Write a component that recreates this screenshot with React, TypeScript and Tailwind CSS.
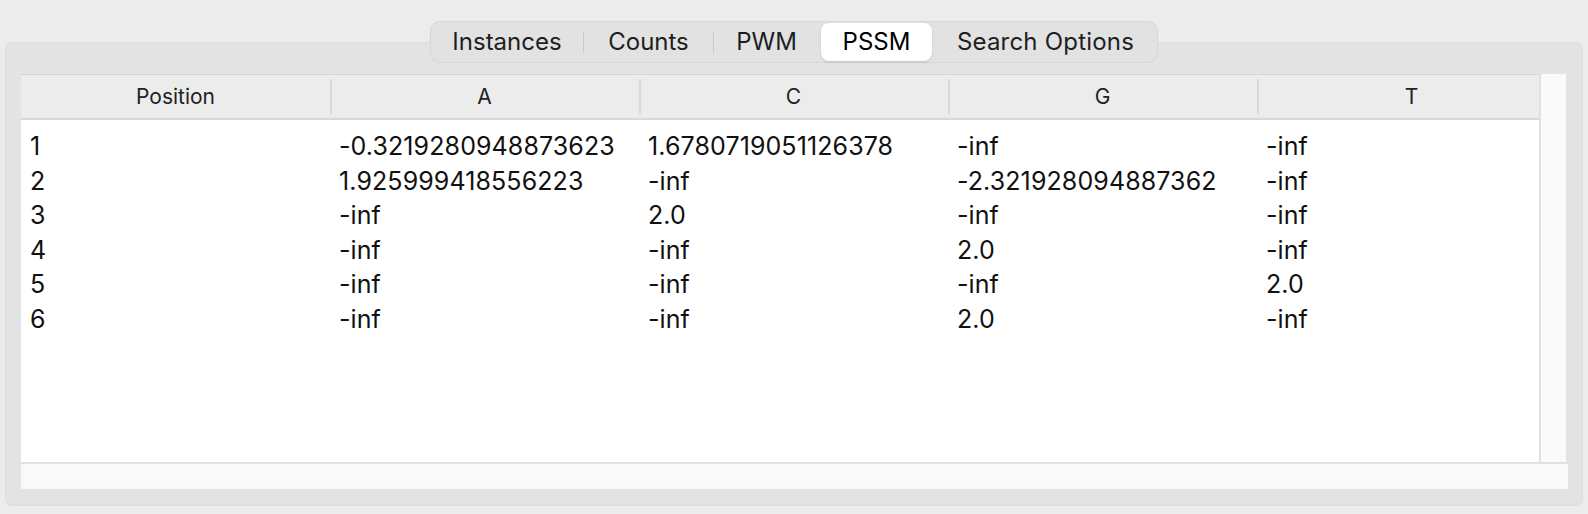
import React from "react";

const rows: string[][] = [
  ["1", "-0.3219280948873623", "1.6780719051126378", "-inf", "-inf"],
  ["2", "1.925999418556223", "-inf", "-2.321928094887362", "-inf"],
  ["3", "-inf", "2.0", "-inf", "-inf"],
  ["4", "-inf", "-inf", "2.0", "-inf"],
  ["5", "-inf", "-inf", "-inf", "2.0"],
  ["6", "-inf", "-inf", "2.0", "-inf"],
];

const headers = ["Position", "A", "C", "G", "T"];

export default function App() {
  return (
    <div
      className="w-[1588px] h-[514px] bg-[#ececec] pt-[21px] overflow-hidden"
      style={{ fontFamily: "Inter, 'Noto Sans', sans-serif" }}
    >
      {/* Segmented control */}
      <div className="relative z-10 flex justify-center">
        <div className="flex items-stretch h-[42px] rounded-[10px] bg-[#e2e2e2] border border-[#d6d6d6] text-[24px] text-[#1e1e1e] leading-none">
          <div className="w-[152px] flex items-center justify-center">Instances</div>
          <div className="w-px self-center h-[21px] bg-[#c9c9c9]" />
          <div className="w-[129px] flex items-center justify-center">Counts</div>
          <div className="w-px self-center h-[21px] bg-[#c9c9c9]" />
          <div className="w-[105px] flex items-center justify-center">PWM</div>
          <div className="w-[115px] flex py-[1px] px-[2px]">
            <div className="flex-1 flex items-center justify-center rounded-[8px] bg-white shadow-[0_1px_2px_rgba(0,0,0,0.15)] text-black">
              PSSM
            </div>
          </div>
          <div className="w-[223px] flex items-center justify-center tracking-[0.2px]">Search Options</div>
        </div>
      </div>

      {/* Panel */}
      <div className="-mt-[21px] mx-[5px] h-[464px] rounded-[7px] bg-[#e3e3e3] border border-[#dddddd] pt-[31px] pl-[15px] pr-[14px] pb-[16px]">
        <div className="h-full flex flex-col">
          <div className="flex flex-1 min-h-0">
            {/* Table */}
            <div className="w-[1518px] overflow-hidden bg-white flex flex-col">
              <div className="w-[1545px] grid grid-cols-5 h-[46px] bg-[#ececec] border-t border-t-[#d5d5d5] border-b-2 border-b-[#d8d8d8] text-[21px] text-[#222222]">
                {headers.map((h, i) => (
                  <div key={h} className="relative flex items-center justify-center">
                    {i > 0 && (
                      <div className="absolute left-0 top-[4px] h-[35px] w-[2px] bg-[#dadada]" />
                    )}
                    {h}
                  </div>
                ))}
              </div>
              <div className="w-[1545px] pt-[8px] text-[25px] tracking-[0.1px] text-[#111111]">
                {rows.map((r) => (
                  <div key={r[0]} className="grid grid-cols-5 h-[34.5px] items-center">
                    {r.map((c, j) => (
                      <div key={j} className="pl-[9px] whitespace-nowrap">
                        {c}
                      </div>
                    ))}
                  </div>
                ))}
              </div>
            </div>
            {/* Vertical scroller track */}
            <div className="w-[27px] border-l-2 border-l-[#e1e1e1] bg-[#fafafa]" />
            <div className="w-[2px]" />
          </div>
          {/* Horizontal scroller track */}
          <div className="h-[27px] border-t-2 border-t-[#e1e1e1] bg-[#f9f9f9]" />
        </div>
      </div>
    </div>
  );
}
